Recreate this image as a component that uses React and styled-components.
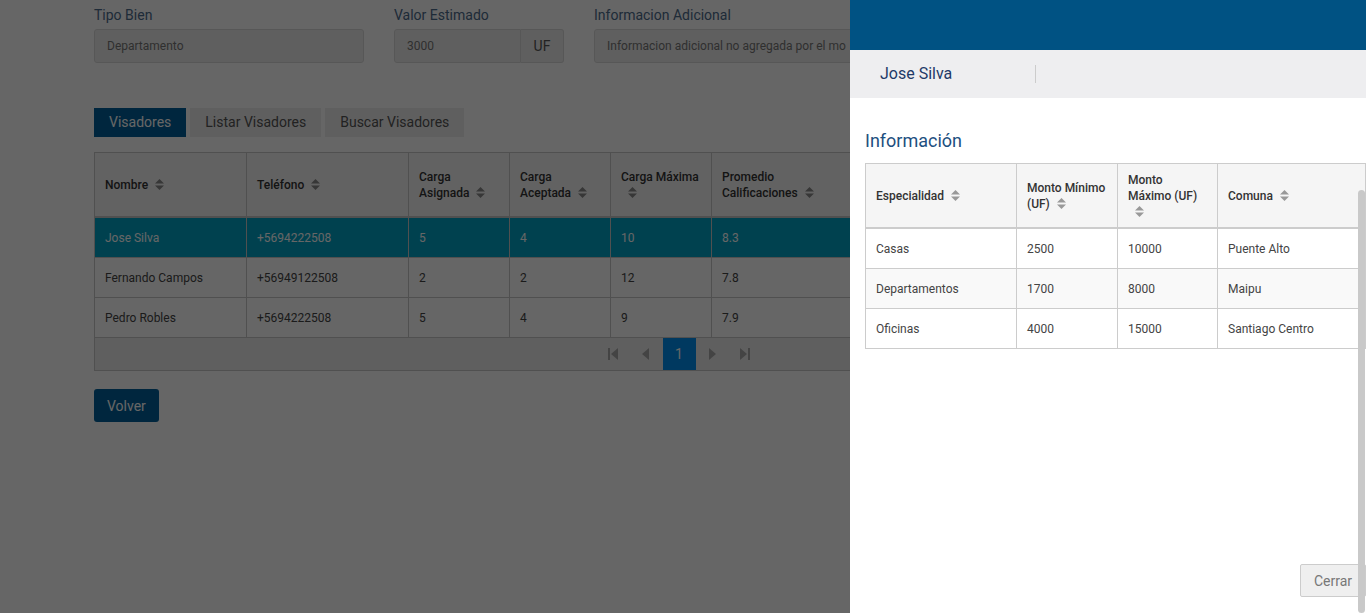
import React from "react";
import styled, { createGlobalStyle } from "styled-components";

const GlobalStyle = createGlobalStyle`
  html, body { margin: 0; padding: 0; height: 100%; overflow: hidden; background: #ffffff; }
  body { font-family: Roboto, "Liberation Sans", Arial, sans-serif; }
  * { box-sizing: border-box; }
`;

const Page = styled.div`
  padding: 5px 0 0 94px;
  width: 1264px;
`;

const FormRow = styled.div`
  display: grid;
  grid-template-columns: 270px 170px 670px;
  column-gap: 30px;
`;

const Field = styled.div`
  display: flex;
  flex-direction: column;
`;

const Label = styled.div`
  font-size: 14px;
  line-height: 20px;
  color: #4d6b8c;
  margin-bottom: 4px;
`;

const ReadOnly = styled.div`
  flex: 1;
  height: 34px;
  display: flex;
  align-items: center;
  padding: 0 12px;
  background: #eeeeee;
  border: 1px solid #dadada;
  border-radius: ${(p) => (p.$joined ? "3px 0 0 3px" : "3px")};
  font-size: 12px;
  color: #777;
  white-space: nowrap;
  overflow: hidden;
`;

const InputGroup = styled.div`
  display: flex;
`;

const Addon = styled.div`
  width: 43px;
  height: 34px;
  display: flex;
  align-items: center;
  justify-content: center;
  background: #eeeeee;
  border: 1px solid #dadada;
  border-left: none;
  border-radius: 0 3px 3px 0;
  font-size: 14px;
  color: #555;
`;

const Tabs = styled.div`
  display: flex;
  gap: 4px;
  margin-top: 45px;
`;

const Tab = styled.div`
  height: 29px;
  line-height: 29px;
  padding: 0 15px;
  font-size: 14px;
  background: ${(p) => (p.$active ? "#00609b" : "#eeeeee")};
  color: ${(p) => (p.$active ? "#ffffff" : "#555")};
`;

const TableWrap = styled.div`
  margin-top: 15px;
  width: 1170px;
  border: 1px solid #c8c8c8;
`;

const Table = styled.table`
  width: 100%;
  border-collapse: separate;
  border-spacing: 0;
  table-layout: fixed;
`;

const Th = styled.th`
  height: 65px;
  padding: 0 10px;
  text-align: left;
  vertical-align: middle;
  font-size: 12px;
  font-weight: 500;
  line-height: 16px;
  color: #333;
  background: #f5f5f5;
  border-right: ${(p) => (p.$last ? "none" : "1px solid #c8c8c8")};
  border-bottom: 2px solid #c8c8c8;
`;

const Tr = styled.tr`
  background: ${(p) => (p.$selected ? "#00a3c6" : p.$striped ? "#f9f9f9" : "#ffffff")};
  color: ${(p) => (p.$selected ? "#ffffff" : "#444")};
`;

const Td = styled.td`
  height: 40px;
  padding: 0 10px;
  font-size: 12px;
  border-right: ${(p) => (p.$last ? "none" : "1px solid #c8c8c8")};
  border-bottom: 1px solid #c8c8c8;
  white-space: nowrap;
  overflow: hidden;
`;

const Pager = styled.div`
  height: 32px;
  display: flex;
  justify-content: center;
  background: #eeeeee;
`;

const PageBtn = styled.div`
  width: 33px;
  height: 32px;
  display: flex;
  align-items: center;
  justify-content: center;
  font-size: 14px;
  color: ${(p) => (p.$active ? "#ffffff" : "#aaaaaa")};
  background: ${(p) => (p.$active ? "#0090f0" : "transparent")};
`;

const Button = styled.button`
  margin-top: 18px;
  height: 33px;
  padding: 0 13px;
  border: none;
  border-radius: 3px;
  background: #00609b;
  color: #fff;
  font-family: inherit;
  font-size: 14px;
`;

const Overlay = styled.div`
  position: fixed;
  inset: 0;
  background: rgba(0, 0, 0, 0.6);
  z-index: 10;
`;

const Panel = styled.aside`
  position: fixed;
  top: 0;
  right: 0;
  bottom: 0;
  width: 516px;
  background: #fff;
  z-index: 20;
  display: flex;
  flex-direction: column;
  overflow: hidden;
`;

const PanelTop = styled.div`
  height: 50px;
  flex: none;
  background: #005283;
`;

const PanelSub = styled.div`
  height: 48px;
  flex: none;
  display: flex;
  align-items: center;
  background: #eeeef0;
`;

const SubName = styled.div`
  width: 186px;
  padding: 0 30px;
  font-size: 16px;
  line-height: 18px;
  color: #1f3a68;
  border-right: 1px solid #cccccc;
`;

const PanelBody = styled.div`
  flex: 1;
  padding: 32px 0 0 15px;
`;

const Heading = styled.h3`
  margin: 0 0 11px;
  font-size: 18px;
  font-weight: 400;
  line-height: 22px;
  color: #1d4f80;
`;

const PanelTable = styled.table`
  width: 501px;
  border-collapse: separate;
  border-spacing: 0;
  table-layout: fixed;
  border-top: 1px solid #cccccc;
  border-left: 1px solid #cccccc;
`;

const PTh = styled.th`
  height: 65px;
  padding: 0 10px;
  text-align: left;
  vertical-align: middle;
  font-size: 12px;
  font-weight: 500;
  line-height: 16px;
  color: #333;
  background: #f5f5f5;
  border-right: 1px solid #cccccc;
  border-bottom: 2px solid #cccccc;
`;

const PTd = styled.td`
  height: 40px;
  padding: 0 10px;
  font-size: 12px;
  color: #444;
  border-right: 1px solid #cccccc;
  border-bottom: 1px solid #cccccc;
  white-space: nowrap;
`;

const PanelFooter = styled.div`
  flex: none;
  display: flex;
  justify-content: flex-end;
  padding: 0 0 16px;
`;

const CloseButton = styled.button`
  height: 33px;
  padding: 0 13px;
  background: #efefef;
  border: 1px solid #cccccc;
  border-radius: 2px;
  color: #777;
  font-family: inherit;
  font-size: 14px;
`;

const ScrollThumb = styled.div`
  position: absolute;
  right: 1px;
  top: 190px;
  bottom: 0;
  width: 7px;
  border-radius: 4px;
  background: #c9c9c9;
`;

const SortIconSvg = styled.svg`
  display: inline-block;
  vertical-align: middle;
  margin-left: 7px;
  margin-top: -2px;
`;

const SortIcon = ({ color = "#999" }) => (
  <SortIconSvg width="9" height="11" viewBox="0 0 9 11">
    <polygon points="4.5,0 9,4.5 0,4.5" fill={color} />
    <polygon points="0,6.5 9,6.5 4.5,11" fill={color} />
  </SortIconSvg>
);

const PagerIcon = ({ type }) => {
  const c = "currentColor";
  if (type === "first")
    return (
      <svg width="10" height="12" viewBox="0 0 10 12">
        <rect x="0" y="0" width="2" height="12" fill={c} />
        <polygon points="10,0 10,12 3,6" fill={c} />
      </svg>
    );
  if (type === "prev")
    return (
      <svg width="8" height="12" viewBox="0 0 8 12">
        <polygon points="7,0 7,12 0,6" fill={c} />
      </svg>
    );
  if (type === "next")
    return (
      <svg width="8" height="12" viewBox="0 0 8 12">
        <polygon points="1,0 1,12 8,6" fill={c} />
      </svg>
    );
  return (
    <svg width="10" height="12" viewBox="0 0 10 12">
      <polygon points="0,0 0,12 7,6" fill={c} />
      <rect x="8" y="0" width="2" height="12" fill={c} />
    </svg>
  );
};

const visadores = [
  ["Jose Silva", "+5694222508", "5", "4", "10", "8.3", ""],
  ["Fernando Campos", "+56949122508", "2", "2", "12", "7.8", ""],
  ["Pedro Robles", "+5694222508", "5", "4", "9", "7.9", ""],
];

const columns = [
  ["Nombre", 152, true],
  ["Teléfono", 162, true],
  ["Carga Asignada", 101, true],
  ["Carga Aceptada", 101, true],
  ["Carga Máxima", 101, true],
  ["Promedio Calificaciones", 140, true],
  ["", null, false],
];

const especialidades = [
  ["Casas", "2500", "10000", "Puente Alto"],
  ["Departamentos", "1700", "8000", "Maipu"],
  ["Oficinas", "4000", "15000", "Santiago Centro"],
];

export default function App() {
  return (
    <>
      <GlobalStyle />
      <Page>
        <FormRow>
          <Field>
            <Label>Tipo Bien</Label>
            <ReadOnly>Departamento</ReadOnly>
          </Field>
          <Field>
            <Label>Valor Estimado</Label>
            <InputGroup>
              <ReadOnly $joined>3000</ReadOnly>
              <Addon>UF</Addon>
            </InputGroup>
          </Field>
          <Field>
            <Label>Informacion Adicional</Label>
            <ReadOnly>Informacion adicional no agregada por el mo</ReadOnly>
          </Field>
        </FormRow>

        <Tabs>
          <Tab $active>Visadores</Tab>
          <Tab>Listar Visadores</Tab>
          <Tab>Buscar Visadores</Tab>
        </Tabs>

        <TableWrap>
          <Table>
            <colgroup>
              {columns.map(([n, w], i) => (
                <col key={i} style={w ? { width: w } : undefined} />
              ))}
            </colgroup>
            <thead>
              <tr>
                {columns.map(([n, , sortable], i) => (
                  <Th key={i} $last={i === columns.length - 1}>
                    {n}
                    {sortable && <SortIcon color="#8a8a8a" />}
                  </Th>
                ))}
              </tr>
            </thead>
            <tbody>
              {visadores.map((r, ri) => (
                <Tr key={ri} $selected={ri === 0}>
                  {r.map((c, ci) => (
                    <Td key={ci} $last={ci === r.length - 1}>
                      {c}
                    </Td>
                  ))}
                </Tr>
              ))}
            </tbody>
          </Table>
          <Pager>
            <PageBtn>
              <PagerIcon type="first" />
            </PageBtn>
            <PageBtn>
              <PagerIcon type="prev" />
            </PageBtn>
            <PageBtn $active>1</PageBtn>
            <PageBtn>
              <PagerIcon type="next" />
            </PageBtn>
            <PageBtn>
              <PagerIcon type="last" />
            </PageBtn>
          </Pager>
        </TableWrap>

        <Button>Volver</Button>
      </Page>

      <Overlay />

      <Panel>
        <PanelTop />
        <PanelSub>
          <SubName>Jose Silva</SubName>
        </PanelSub>
        <PanelBody>
          <Heading>Información</Heading>
          <PanelTable>
            <colgroup>
              <col style={{ width: 151 }} />
              <col style={{ width: 101 }} />
              <col style={{ width: 100 }} />
              <col />
            </colgroup>
            <thead>
              <tr>
                <PTh>
                  Especialidad
                  <SortIcon />
                </PTh>
                <PTh>
                  Monto Mínimo (UF)
                  <SortIcon />
                </PTh>
                <PTh>
                  Monto Máximo (UF)
                  <SortIcon />
                </PTh>
                <PTh>
                  Comuna
                  <SortIcon />
                </PTh>
              </tr>
            </thead>
            <tbody>
              {especialidades.map((r, ri) => (
                <Tr key={ri} $striped={ri === 1}>
                  {r.map((c, ci) => (
                    <PTd key={ci}>{c}</PTd>
                  ))}
                </Tr>
              ))}
            </tbody>
          </PanelTable>
        </PanelBody>
        <PanelFooter>
          <CloseButton>Cerrar</CloseButton>
        </PanelFooter>
        <ScrollThumb />
      </Panel>
    </>
  );
}
